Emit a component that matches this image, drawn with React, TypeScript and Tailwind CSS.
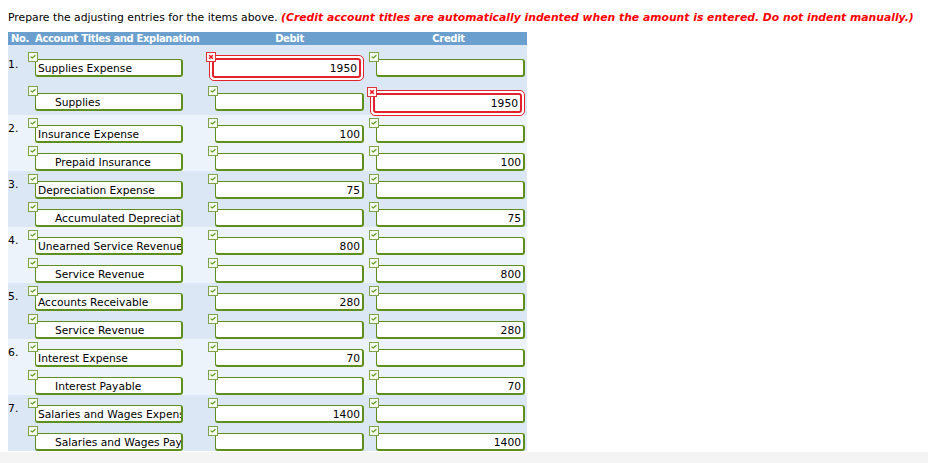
import React from "react";

interface Entry {
  no: number;
  debitAccount: string;
  creditAccount: string;
  amount: string;
}

const entries: Entry[] = [
  { no: 1, debitAccount: "Supplies Expense", creditAccount: "Supplies", amount: "1950" },
  { no: 2, debitAccount: "Insurance Expense", creditAccount: "Prepaid Insurance", amount: "100" },
  { no: 3, debitAccount: "Depreciation Expense", creditAccount: "Accumulated Depreciation", amount: "75" },
  { no: 4, debitAccount: "Unearned Service Revenue", creditAccount: "Service Revenue", amount: "800" },
  { no: 5, debitAccount: "Accounts Receivable", creditAccount: "Service Revenue", amount: "280" },
  { no: 6, debitAccount: "Interest Expense", creditAccount: "Interest Payable", amount: "70" },
  { no: 7, debitAccount: "Salaries and Wages Expense", creditAccount: "Salaries and Wages Payable", amount: "1400" },
];

function CheckIcon() {
  return (
    <svg width="10" height="10" viewBox="0 0 10 10" className="block">
      <rect x="0.5" y="0.5" width="9" height="9" fill="#f5faee" stroke="#7fa24c" />
      <polyline points="2.6,4.6 4.3,6 7.4,3.2" fill="none" stroke="#5f9a22" strokeWidth="1.2" />
    </svg>
  );
}

function CrossIcon() {
  return (
    <svg width="10" height="10" viewBox="0 0 10 10" className="block">
      <rect x="0.5" y="0.5" width="9" height="9" fill="#fff4f4" stroke="#e0333a" />
      <path d="M3.2 3.2 L6.8 6.8 M6.8 3.2 L3.2 6.8" stroke="#e4161f" strokeWidth="1.5" />
    </svg>
  );
}

interface FieldProps {
  value: string;
  className: string;
  align?: "left" | "right";
  indent?: boolean;
}

// green "ok" field: check icon sits over the top-left corner
function Field({ value, className, align = "left", indent }: FieldProps) {
  return (
    <div className={`relative ${className}`}>
      <div
        className={`h-[18px] bg-white border border-[#5e8f1c] border-b-2 border-r-2 rounded-[3px] overflow-hidden whitespace-nowrap leading-[18px] text-[10.7px] text-black ${
          align === "right" ? "text-right pr-[2px]" : indent ? "pl-[19px]" : "pl-[2px]"
        }`}
      >
        {value}
      </div>
      <div className="absolute -left-[7px] -top-[7px]">
        <CheckIcon />
      </div>
    </div>
  );
}

// red "wrong" field: double red frame with an x icon
function ErrorField({ value, className }: { value: string; className: string }) {
  return (
    <div className={`relative ${className}`}>
      <div className="h-[26px] bg-white border border-[#e3222b] rounded-[5px] p-[2px]">
        <div className="h-full border-2 border-[#e3222b] rounded-[3px] text-right pr-[2px] leading-[17px] text-[10.7px] text-black">
          {value}
        </div>
      </div>
      <div className="absolute -left-[3px] -top-[3px]">
        <CrossIcon />
      </div>
    </div>
  );
}

function App() {
  return (
    <div className="w-[928px] h-[463px] flex flex-col bg-white font-['DejaVu_Sans',Verdana,sans-serif] text-[10.8px]">
      <div className="px-[8px] pt-[11px]">
        <p className="leading-[13px] text-black whitespace-nowrap">
          Prepare the adjusting entries for the items above.{" "}
          <span className="text-[#ff0000] font-bold italic text-[10.8px]">
            (Credit account titles are automatically indented when the amount is entered. Do not indent manually.)
          </span>
        </p>
        <div className="w-[519px] mt-[8px]">
          <div className="flex h-[13px] bg-[#6b9fce] text-white font-bold text-[10px] tracking-[-0.35px] leading-[13px]">
            <div className="w-[27px] pl-[3px] whitespace-nowrap">No.</div>
            <div className="w-[174px] whitespace-nowrap">Account Titles and Explanation</div>
            <div className="w-[161px] text-center">Debit</div>
            <div className="w-[157px] text-center">Credit</div>
          </div>

          {entries.map((e) => {
            const first = e.no === 1;
            const bg = e.no % 2 === 1 ? "bg-[#dce7f5]" : "bg-[#edf3fb]";
            return (
              <div key={e.no} className={bg}>
                <div className={`flex items-start ${first ? "h-[37px]" : "h-[28px]"}`}>
                  <div className={`w-[20px] leading-[13px] text-black ${first ? "mt-[13px]" : "mt-[7px]"}`}>
                    {e.no}.
                  </div>
                  <div className="w-[181px]">
                    <Field
                      value={e.debitAccount}
                      className={`ml-[7px] w-[148px] ${first ? "mt-[14px]" : "mt-[10px]"}`}
                    />
                  </div>
                  <div className="w-[161px]">
                    {first ? (
                      <ErrorField value={e.amount} className="mt-[10px] w-[155px]" />
                    ) : (
                      <Field value={e.amount} align="right" className="mt-[10px] ml-[6px] w-[149px]" />
                    )}
                  </div>
                  <div className="w-[157px]">
                    <Field value="" className={`ml-[6px] w-[149px] ${first ? "mt-[14px]" : "mt-[10px]"}`} />
                  </div>
                </div>
                <div className={`flex items-start ${first ? "h-[33px]" : "h-[28px]"}`}>
                  <div className="w-[20px]" />
                  <div className="w-[181px]">
                    <Field
                      value={e.creditAccount}
                      indent
                      className={`ml-[7px] w-[148px] ${first ? "mt-[11px]" : "mt-[10px]"}`}
                    />
                  </div>
                  <div className="w-[161px]">
                    <Field value="" className={`ml-[6px] w-[149px] ${first ? "mt-[11px]" : "mt-[10px]"}`} />
                  </div>
                  <div className="w-[157px]">
                    {first ? (
                      <ErrorField value={e.amount} className="mt-[8px] w-[155px]" />
                    ) : (
                      <Field value={e.amount} align="right" className="mt-[10px] ml-[6px] w-[149px]" />
                    )}
                  </div>
                </div>
              </div>
            );
          })}
        </div>
      </div>
      <div className="flex-1 mt-[1px] bg-[#f4f4f4]" />
    </div>
  );
}

export default App;
